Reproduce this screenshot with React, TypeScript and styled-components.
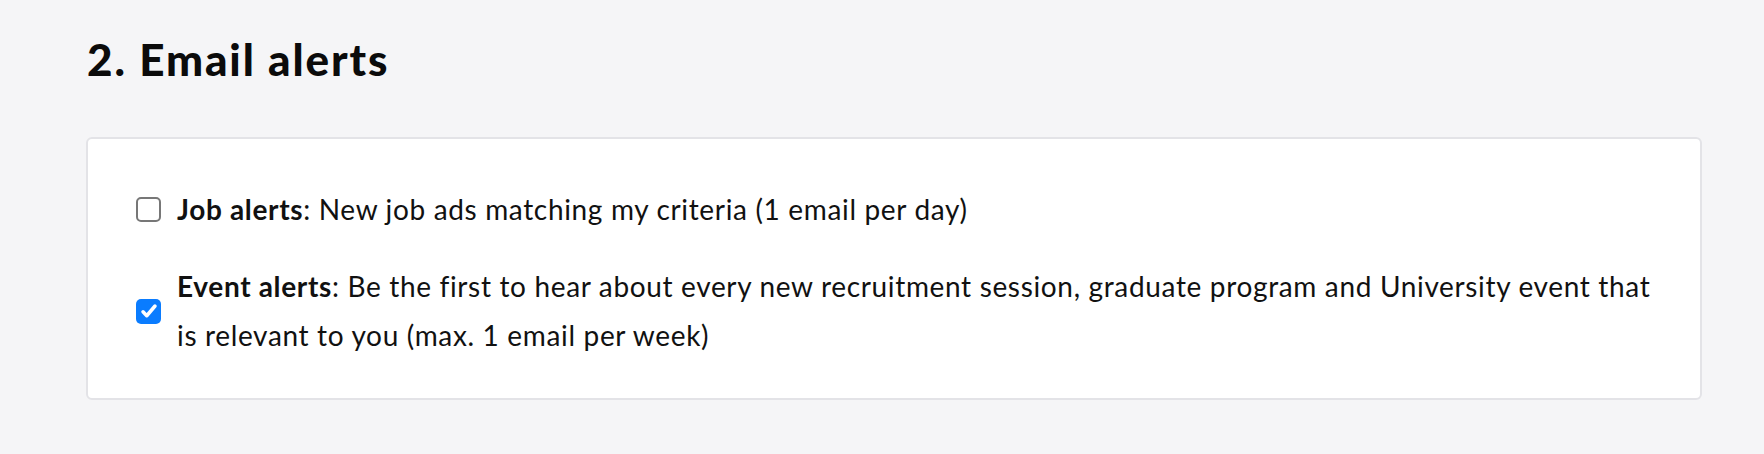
import React from 'react'
import styled, { createGlobalStyle } from 'styled-components'

const GlobalStyle = createGlobalStyle`
  html, body {
    margin: 0;
    padding: 0;
    background: #f5f5f7;
  }
  body {
    font-family: Lato, "Noto Sans", sans-serif;
    color: #111;
  }
`

const Page = styled.main`
  padding: 27px 62px 0 86px;
  width: 1764px;
  box-sizing: border-box;
`

const Heading = styled.h2`
  font-size: 44px;
  font-weight: 900;
  letter-spacing: 1.9px;
  margin: 0 0 46px 1px;
  line-height: 64px;
  color: #0b0b0b;
`

const Card = styled.section`
  background: #fff;
  border: 2px solid #e3e3e7;
  border-radius: 6px;
  padding: 46px 34px 38px 48px;
  display: flex;
  flex-direction: column;
  gap: 28px;
`

const Option = styled.label`
  display: flex;
  align-items: center;
  gap: 16px;
  font-size: 28px;
  line-height: 49px;
  letter-spacing: 0.66px;
  cursor: pointer;
`

const Box = styled.span<{ $checked?: boolean }>`
  flex: none;
  width: 25px;
  height: 25px;
  box-sizing: border-box;
  border-radius: 5px;
  display: flex;
  align-items: center;
  justify-content: center;
  background: ${(p) => (p.$checked ? '#0a7cff' : '#fff')};
  border: ${(p) => (p.$checked ? 'none' : '2px solid #777')};
`

const Text = styled.span`
  flex: 1;
  strong {
    font-weight: 700;
  }
`

const Check = () => (
  <svg width="20" height="20" viewBox="0 0 16 16" fill="none">
    <path d="M3.2 8.6l3 3.2L12.8 4" stroke="#fff" strokeWidth="2.8" strokeLinecap="round" strokeLinejoin="round" />
  </svg>
)

const options = [
  {
    title: 'Job alerts',
    body: 'New job ads matching my criteria (1 email per day)',
    checked: false,
  },
  {
    title: 'Event alerts',
    body: 'Be the first to hear about every new recruitment session, graduate program and University event that is relevant to you (max. 1 email per week)',
    checked: true,
  },
]

export default function App() {
  return (
    <>
      <GlobalStyle />
      <Page>
        <Heading>2. Email alerts</Heading>
        <Card>
          {options.map((o) => (
            <Option key={o.title}>
              <Box $checked={o.checked}>{o.checked && <Check />}</Box>
              <Text>
                <strong>{o.title}</strong>: {o.body}
              </Text>
            </Option>
          ))}
        </Card>
      </Page>
    </>
  )
}
